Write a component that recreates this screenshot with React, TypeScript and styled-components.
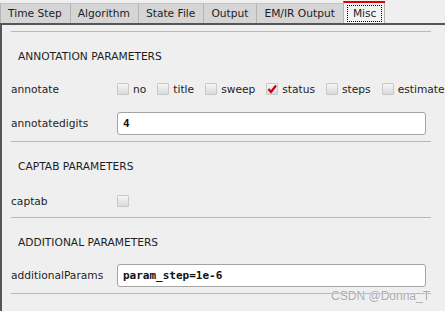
import React, { useState } from 'react';
import styled, { createGlobalStyle } from 'styled-components';

const GlobalStyle = createGlobalStyle`
    html, body {
        margin: 0;
        padding: 0;
        background: #efefef;
    }
`;

const Window = styled.div`
    position: relative;
    width: 445px;
    height: 311px;
    overflow: hidden;
    background: #efefef;
    font-family: 'DejaVu Sans', sans-serif;
    font-size: 10.67px;
    color: #1e1e1e;
    display: flex;
    flex-direction: column;
`;

const TabBar = styled.div`
    display: flex;
    align-items: flex-end;
    height: 23px;
    border-bottom: 2px solid #555555;
`;

const Tab = styled.div<{ $active?: boolean }>`
    box-sizing: border-box;
    display: flex;
    align-items: center;
    height: ${(p) => (p.$active ? '22px' : '20px')};
    padding: ${(p) => (p.$active ? '0 3px' : '0 8px 0 7px')};
    border-left: 1px solid #b4b4b4;
    border-top: ${(p) => (p.$active ? '2px solid #e00000' : '1px solid #c4c4c4')};
    background: ${(p) => (p.$active ? '#f3f3f3' : '#d5d5d5')};
    box-shadow: ${(p) => (p.$active ? 'inset -1px 0 #b4b4b4, inset 0 -1px #ffffff' : 'none')};
    white-space: nowrap;
`;

const FocusLabel = styled.span`
    box-sizing: border-box;
    display: flex;
    align-items: center;
    height: 17px;
    padding: 0 5px;
    border: 1px dotted #000000;
`;

const Panel = styled.div`
    flex: 1;
    border-left: 2px solid #555555;
    padding: 5px 14px 0 9px;
    display: flex;
    flex-direction: column;
`;

const Divider = styled.div`
    height: 1px;
    background: #b9b9b9;
    margin-top: 1px;
`;

const SectionTitle = styled.div`
    box-sizing: border-box;
    height: 40px;
    padding: 17px 0 0 7px;
    line-height: 16px;
`;

const Row = styled.div<{ $shift?: number }>`
    box-sizing: border-box;
    display: grid;
    grid-template-columns: 106px 1fr;
    align-items: center;
    height: 34px;
    padding-top: ${(p) => p.$shift ?? 0}px;
`;

const Label = styled.div`
    white-space: nowrap;
`;

const Options = styled.div`
    display: flex;
    align-items: center;
    gap: 11px;
    white-space: nowrap;
`;

const Option = styled.label`
    display: flex;
    align-items: center;
    gap: 4px;
    cursor: default;
`;

const Box = styled.span`
    box-sizing: border-box;
    width: 12px;
    height: 12px;
    border: 1px solid #c9c9c9;
    border-radius: 1px;
    background: linear-gradient(#f6f6f6, #dadada);
    display: flex;
    align-items: center;
    justify-content: center;
`;

const Field = styled.input`
    box-sizing: border-box;
    width: 309px;
    height: 23px;
    border: 1px solid #a3a3a3;
    border-radius: 3px;
    background: #ffffff;
    padding: 0 5px;
    font-family: 'DejaVu Sans Mono', monospace;
    font-weight: bold;
    font-size: 11px;
    color: #111111;
    outline: none;
`;

const Watermark = styled.div`
    position: absolute;
    right: 15px;
    bottom: 8px;
    font-family: 'Liberation Sans', Arial, sans-serif;
    font-size: 12px;
    color: #a8a8a8;
    text-shadow: 0 0 1px #ffffff, 0 0 1px #ffffff;
`;

const CheckBox = ({ checked, onToggle }: { checked: boolean; onToggle: () => void }) => (
    <Box onClick={onToggle}>
        {checked && (
            <svg width="10" height="10" viewBox="0 0 10 10">
                <path d="M1.5 5 L4 8 L9 1.5" fill="none" stroke="#c8001a" strokeWidth="2.2" />
            </svg>
        )}
    </Box>
);

const tabs = ['Time Step', 'Algorithm', 'State File', 'Output', 'EM/IR Output', 'Misc'];
const annotateOptions = ['no', 'title', 'sweep', 'status', 'steps', 'estimate'];

export default function App() {
    const [annotate, setAnnotate] = useState<string[]>(['status']);
    const [captab, setCaptab] = useState(false);
    const [digits, setDigits] = useState('4');
    const [extra, setExtra] = useState('param_step=1e-6');

    const toggle = (name: string) =>
        setAnnotate((list) => (list.includes(name) ? list.filter((n) => n !== name) : [...list, name]));

    return (
        <>
            <GlobalStyle />
            <Window>
                <TabBar>
                    {tabs.map((t) =>
                        t === 'Misc' ? (
                            <Tab key={t} $active>
                                <FocusLabel>{t}</FocusLabel>
                            </Tab>
                        ) : (
                            <Tab key={t}>{t}</Tab>
                        ),
                    )}
                </TabBar>
                <Panel>
                    <Divider />
                    <SectionTitle>ANNOTATION PARAMETERS</SectionTitle>
                    <Row>
                        <Label>annotate</Label>
                        <Options>
                            {annotateOptions.map((o) => (
                                <Option key={o}>
                                    <CheckBox checked={annotate.includes(o)} onToggle={() => toggle(o)} />
                                    {o}
                                </Option>
                            ))}
                        </Options>
                    </Row>
                    <Row>
                        <Label>annotatedigits</Label>
                        <Field value={digits} onChange={(e) => setDigits(e.target.value)} />
                    </Row>
                    <Divider />
                    <SectionTitle>CAPTAB PARAMETERS</SectionTitle>
                    <Row $shift={4}>
                        <Label>captab</Label>
                        <Options>
                            <CheckBox checked={captab} onToggle={() => setCaptab(!captab)} />
                        </Options>
                    </Row>
                    <Divider />
                    <SectionTitle>ADDITIONAL PARAMETERS</SectionTitle>
                    <Row>
                        <Label>additionalParams</Label>
                        <Field value={extra} onChange={(e) => setExtra(e.target.value)} />
                    </Row>
                    <Divider />
                </Panel>
                <Watermark>CSDN @Donna_T</Watermark>
            </Window>
        </>
    );
}
